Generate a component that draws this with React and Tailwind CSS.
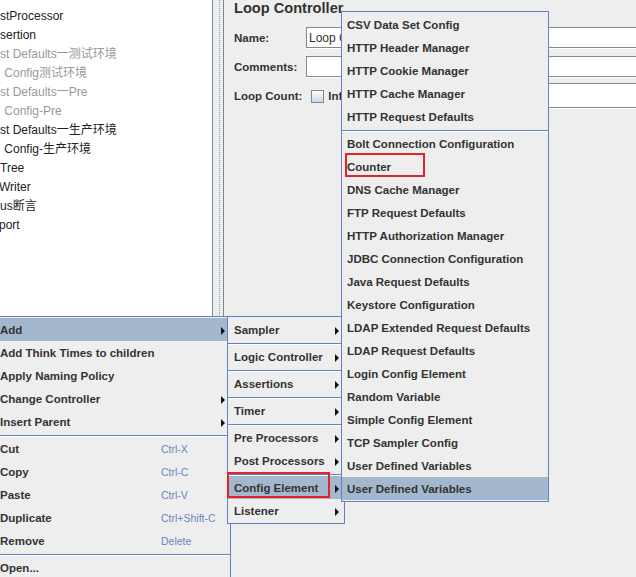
import React from "react";

const tree = [
  { t: "stProcessor", g: false },
  { t: "sertion", g: false },
  { t: "st Defaults一测试环境", g: true },
  { t: " Config测试环境", g: true, pad: true },
  { t: "st Defaults一Pre", g: true },
  { t: " Config-Pre", g: true, pad: true },
  { t: "st Defaults一生产环境", g: false },
  { t: " Config-生产环境", g: false, pad: true },
  { t: "Tree", g: false },
  { t: "Writer", g: false, neg: true },
  { t: "us断言", g: false },
  { t: "port", g: false, neg: true },
];

function Arrow() {
  return (
    <span className="ml-auto mr-[5px] w-0 h-0 border-y-[4px] border-y-transparent border-l-[4px] border-l-[#111]" />
  );
}

function Sep() {
  return (
    <div className="h-[4px] pt-[2px]">
      <div className="h-px bg-[#6382bf]" />
      <div className="h-px bg-white" />
    </div>
  );
}

function M1Item({ label, shortcut, arrow, hl }) {
  return (
    <div className={`h-[23px] flex items-center pl-[1px] pt-[2px] ${hl ? "bg-[#a3b8cc]" : ""}`}>
      <span className="w-[161px] shrink-0 font-bold text-[11.5px] whitespace-nowrap">{label}</span>
      {shortcut && <span className="text-[10.5px] text-[#6a84c4] whitespace-nowrap">{shortcut}</span>}
      {arrow && <Arrow />}
    </div>
  );
}

function Item({ label, arrow, hl, pl }) {
  return (
    <div className={`h-[23px] flex items-center pt-[2px] ${pl} ${hl ? "bg-[#a3b8cc]" : ""}`}>
      <span className="font-bold text-[11.5px] whitespace-nowrap">{label}</span>
      {arrow && <Arrow />}
    </div>
  );
}

const cfg1 = ["CSV Data Set Config", "HTTP Header Manager", "HTTP Cookie Manager", "HTTP Cache Manager", "HTTP Request Defaults"];
const cfg2 = [
  "Bolt Connection Configuration",
  "Counter",
  "DNS Cache Manager",
  "FTP Request Defaults",
  "HTTP Authorization Manager",
  "JDBC Connection Configuration",
  "Java Request Defaults",
  "Keystore Configuration",
  "LDAP Extended Request Defaults",
  "LDAP Request Defaults",
  "Login Config Element",
  "Random Variable",
  "Simple Config Element",
  "TCP Sampler Config",
  "User Defined Variables",
];

export default function App() {
  return (
    <div className="relative w-[636px] h-[577px] overflow-hidden bg-[#eeeeee] text-[#333333] font-['Liberation_Sans','Noto_Sans_CJK_SC',sans-serif]">
      <div className="flex h-full">
        {/* tree */}
        <div className="w-[213px] h-[316px] shrink-0 bg-white border-r border-[#7a8a99] pt-[7px] overflow-hidden">
          {tree.map((r, i) => (
            <div
              key={i}
              className={`h-[19px] leading-[19px] text-[12px] whitespace-pre ${r.g ? "text-[#999999]" : "text-[#222222]"} ${r.pad ? "pl-[1px]" : ""} ${r.neg ? "-ml-[1px]" : ""}`}
            >
              {r.t}
            </div>
          ))}
        </div>
        {/* divider */}
        <div className="w-[10px] h-full shrink-0 flex pl-[6px]">
          <div className="h-full border-l border-dotted border-[#8d9bb0]" />
        </div>
        {/* right panel */}
        <div className="flex-1 h-full border-l border-[#7a8a99] pl-[10px]">
          <div className="h-[17px] leading-[17px] text-[14.6px] font-bold whitespace-nowrap">Loop Controller</div>
          <div className="mt-[10px] flex items-center h-[21px]">
            <span className="w-[72px] shrink-0 pt-[2px] text-[11.5px] font-bold">Name:</span>
            <div className="flex-1 h-[21px] bg-white border-t border-l border-b border-[#7a8a99] shadow-[0_1px_0_#ffffff] flex items-center pl-[2px] pt-[1px] text-[12px] whitespace-nowrap overflow-hidden">
              Loop Controller
            </div>
          </div>
          <div className="mt-[8px] flex items-center h-[21px]">
            <span className="w-[72px] shrink-0 pt-[2px] text-[11.5px] font-bold">Comments:</span>
            <div className="flex-1 h-[21px] bg-white border-t border-l border-b border-[#7a8a99] shadow-[0_1px_0_#ffffff]" />
          </div>
          <div className="mt-[6px] flex items-center h-[25px]">
            <span className="pt-[2px] text-[11.5px] font-bold whitespace-nowrap">Loop Count:</span>
            <span className="ml-[9px] mt-[1px] w-[13px] h-[13px] shrink-0 border border-[#7a8a99] bg-[linear-gradient(#ffffff,#c9d6e4)]" />
            <span className="ml-[4px] pt-[2px] text-[11.5px] font-bold whitespace-nowrap">Infinite</span>
            <div className="ml-[6px] flex-1 h-[25px] bg-white border-t border-l border-b border-[#7a8a99] shadow-[0_1px_0_#ffffff]" />
          </div>
        </div>
      </div>

      {/* Context menu */}
      <div className="absolute left-[-2px] top-[316px] w-[233px] h-[270px] border border-[#6382bf] py-[1px] bg-[#eeeeee] z-10">
        <M1Item label="Add" arrow hl />
        <M1Item label="Add Think Times to children" />
        <M1Item label="Apply Naming Policy" />
        <M1Item label="Change Controller" arrow />
        <M1Item label="Insert Parent" arrow />
        <Sep />
        <M1Item label="Cut" shortcut="Ctrl-X" />
        <M1Item label="Copy" shortcut="Ctrl-C" />
        <M1Item label="Paste" shortcut="Ctrl-V" />
        <M1Item label="Duplicate" shortcut="Ctrl+Shift-C" />
        <M1Item label="Remove" shortcut="Delete" />
        <Sep />
        <M1Item label="Open..." />
      </div>

      {/* Add submenu */}
      <div className="absolute left-[227px] top-[316px] w-[118px] border border-[#6382bf] py-[1px] bg-[#eeeeee] z-20">
        <Item label="Sampler" arrow pl="pl-[6px]" />
        <Sep />
        <Item label="Logic Controller" arrow pl="pl-[6px]" />
        <Sep />
        <Item label="Assertions" arrow pl="pl-[6px]" />
        <Sep />
        <Item label="Timer" arrow pl="pl-[6px]" />
        <Sep />
        <Item label="Pre Processors" arrow pl="pl-[6px]" />
        <Item label="Post Processors" arrow pl="pl-[6px]" />
        <Sep />
        <Item label="Config Element" arrow hl pl="pl-[6px]" />
        <Item label="Listener" arrow pl="pl-[6px]" />
      </div>

      {/* Config Element submenu */}
      <div className="absolute left-[341px] top-[11px] w-[208px] border border-[#6382bf] py-[1px] bg-[#eeeeee] z-30">
        {cfg1.map((l) => (
          <Item key={l} label={l} pl="pl-[5px]" />
        ))}
        <Sep />
        {cfg2.map((l) => (
          <Item key={l} label={l} pl="pl-[5px]" />
        ))}
        <Item label="User Defined Variables" hl pl="pl-[5px]" />
      </div>

      {/* red highlight boxes */}
      <div className="absolute left-[227px] top-[472px] w-[103px] h-[26px] border-2 border-[#e3232a] z-40" />
      <div className="absolute left-[345px] top-[153px] w-[80px] h-[24px] border-2 border-[#e3232a] z-40" />
    </div>
  );
}
